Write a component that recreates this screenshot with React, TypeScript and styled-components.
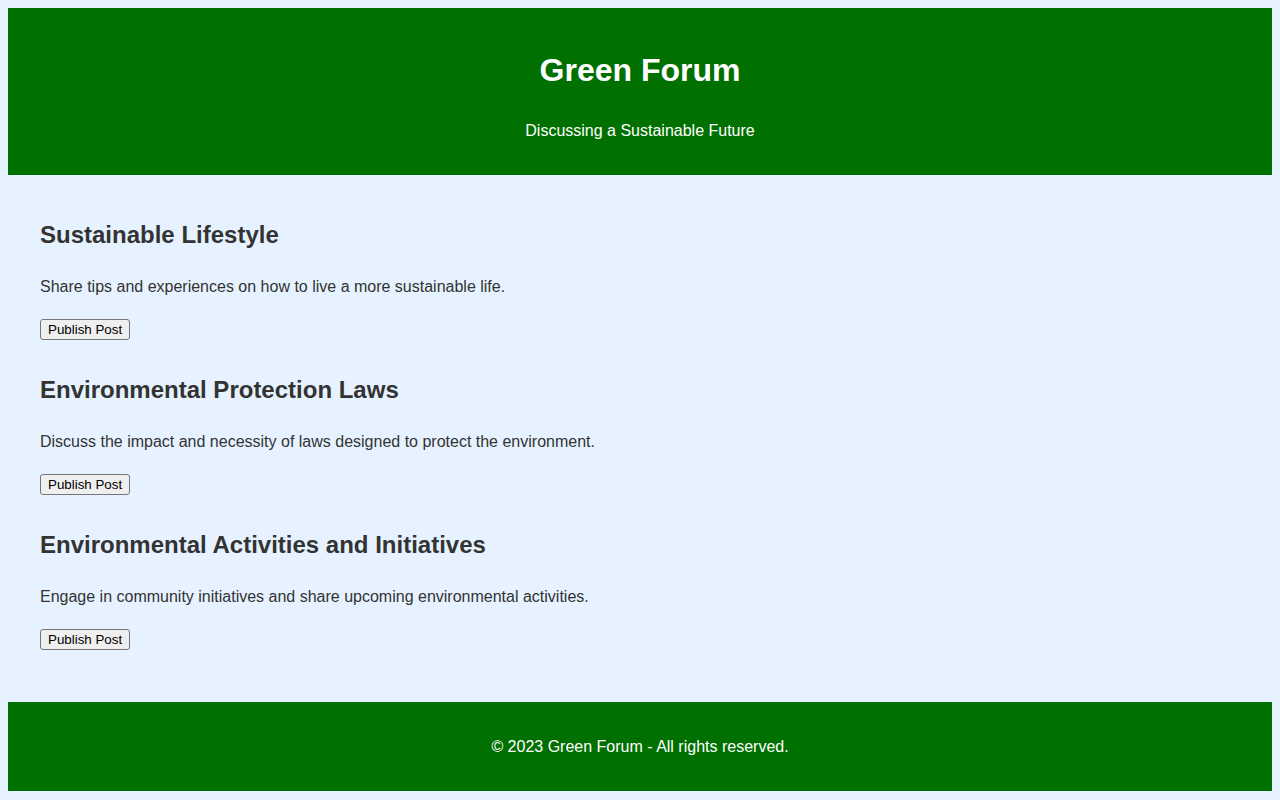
import React from "react";
import styled, { createGlobalStyle } from "styled-components";

const GlobalStyle = createGlobalStyle`
  html, body {
    background: #e6f2ff;
  }
  body {
    margin: 8px;
    font-family: "Liberation Sans", Arial, sans-serif;
    color: #333333;
  }
`;

const Page = styled.div`
  display: flex;
  flex-direction: column;
`;

const Header = styled.header`
  background: #007000;
  color: #ffffff;
  text-align: center;
  padding: 44px 20px 35px;
  display: flex;
  flex-direction: column;
  gap: 33px;
`;

const Title = styled.h1`
  margin: 0;
  font-size: 32px;
  line-height: 37px;
  font-weight: bold;
`;

const Subtitle = styled.p`
  margin: 0;
  font-size: 16px;
  line-height: 18px;
`;

const Main = styled.main`
  padding: 46px 32px 52px;
  display: flex;
  flex-direction: column;
  gap: 36px;
`;

const Topic = styled.section`
  display: flex;
  flex-direction: column;
  align-items: flex-start;
`;

const TopicTitle = styled.h2`
  margin: 0 0 29px;
  font-size: 24px;
  line-height: 28px;
  font-weight: bold;
  color: #333333;
`;

const TopicText = styled.p`
  margin: 0 0 23px;
  font-size: 16px;
  line-height: 18px;
  color: #333333;
`;

const PublishButton = styled.button`
  box-sizing: border-box;
  height: 21px;
  padding: 1px 7px;
  font-family: "Liberation Sans", Arial, sans-serif;
  font-size: 13.333px;
  line-height: 15px;
  color: #000000;
  background: #efefef;
  border: 1px solid #767676;
  border-radius: 3px;
  cursor: pointer;
`;

const Footer = styled.footer`
  background: #007000;
  color: #ffffff;
  text-align: center;
  padding: 36px 20px 35px;
`;

const FooterText = styled.p`
  margin: 0;
  font-size: 16px;
  line-height: 18px;
`;

const topics = [
  {
    title: "Sustainable Lifestyle",
    text: "Share tips and experiences on how to live a more sustainable life.",
  },
  {
    title: "Environmental Protection Laws",
    text: "Discuss the impact and necessity of laws designed to protect the environment.",
  },
  {
    title: "Environmental Activities and Initiatives",
    text: "Engage in community initiatives and share upcoming environmental activities.",
  },
];

export default function App() {
  return (
    <>
      <GlobalStyle />
      <Page>
        <Header>
          <Title>Green Forum</Title>
          <Subtitle>Discussing a Sustainable Future</Subtitle>
        </Header>
        <Main>
          {topics.map((t) => (
            <Topic key={t.title}>
              <TopicTitle>{t.title}</TopicTitle>
              <TopicText>{t.text}</TopicText>
              <PublishButton>Publish Post</PublishButton>
            </Topic>
          ))}
        </Main>
        <Footer>
          <FooterText>© 2023 Green Forum - All rights reserved.</FooterText>
        </Footer>
      </Page>
    </>
  );
}
